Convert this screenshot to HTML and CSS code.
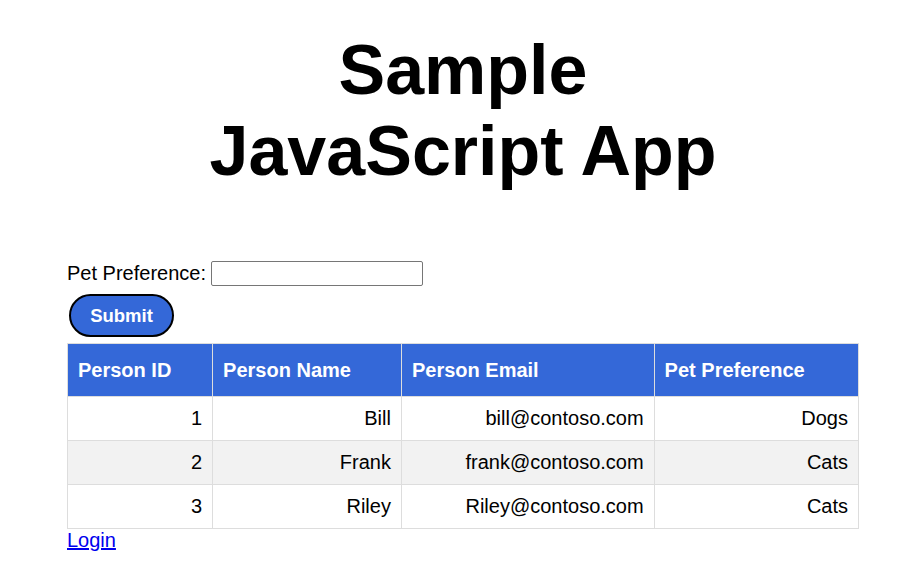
FILE: index.html
```html
<!DOCTYPE html>
<html>
<head>
<meta charset="utf-8">
<link rel="stylesheet" href="styles.css">
</head>
<body>
<main class="page">
  <h1 class="title">Sample JavaScript App</h1>
  <form class="pet-form">
    <label class="pet-label">Pet Preference: <input class="pet-input" type="text"></label>
    <button class="submit-btn" type="button">Submit</button>
  </form>
  <table class="people">
    <thead>
      <tr><th>Person ID</th><th>Person Name</th><th>Person Email</th><th>Pet Preference</th></tr>
    </thead>
    <tbody>
      <tr><td>1</td><td>Bill</td><td>bill@contoso.com</td><td>Dogs</td></tr>
      <tr><td>2</td><td>Frank</td><td>frank@contoso.com</td><td>Cats</td></tr>
      <tr><td>3</td><td>Riley</td><td>Riley@contoso.com</td><td>Cats</td></tr>
    </tbody>
  </table>
  <a class="login" href="#">Login</a>
</main>
</body>
</html>
```

FILE: styles.css
```css
html, body {
  margin: 0;
  padding: 0;
  background: #fff;
}
body {
  font-family: "Liberation Sans", Arial, sans-serif;
  font-size: 20px;
  color: #000;
}
.page {
  width: 792px;
  margin: 0 auto 0 calc(50% - 395px);
}
.title {
  font-size: 70px;
  font-weight: bold;
  text-align: center;
  max-width: 600px;
  margin: 30px auto 0;
  line-height: 81px;
  height: 231px;
}
.pet-form {
  display: flex;
  flex-direction: column;
  align-items: flex-start;
  gap: 8px;
  margin-bottom: 6px;
}
.pet-label {
  display: flex;
  align-items: center;
  gap: 5px;
  line-height: 23px;
}
.pet-input {
  width: 206px;
  height: 21px;
  padding: 1px 2px;
  border: 1px solid #767676;
  border-radius: 2px;
  font-size: 14px;
  margin: 0;
}
.submit-btn {
  margin-left: 2px;
  width: 105px;
  height: 43px;
  border: 2px solid #000;
  border-radius: 22px;
  background: #3468d8;
  color: #fff;
  font-family: "Liberation Sans", Arial, sans-serif;
  font-weight: bold;
  font-size: 18.5px;
}
.people {
  width: 100%;
  border-collapse: collapse;
}
.people th, .people td {
  border: 1px solid #ddd;
  padding: 10px;
  line-height: 23px;
}
.people th {
  background: #3468d8;
  color: #fff;
  text-align: left;
  padding-top: 15px;
  padding-bottom: 14px;
}
.people td {
  text-align: right;
}
.people tbody tr:nth-child(even) {
  background: #f2f2f2;
}
.login {
  color: #0000ee;
  line-height: 23px;
}
```
